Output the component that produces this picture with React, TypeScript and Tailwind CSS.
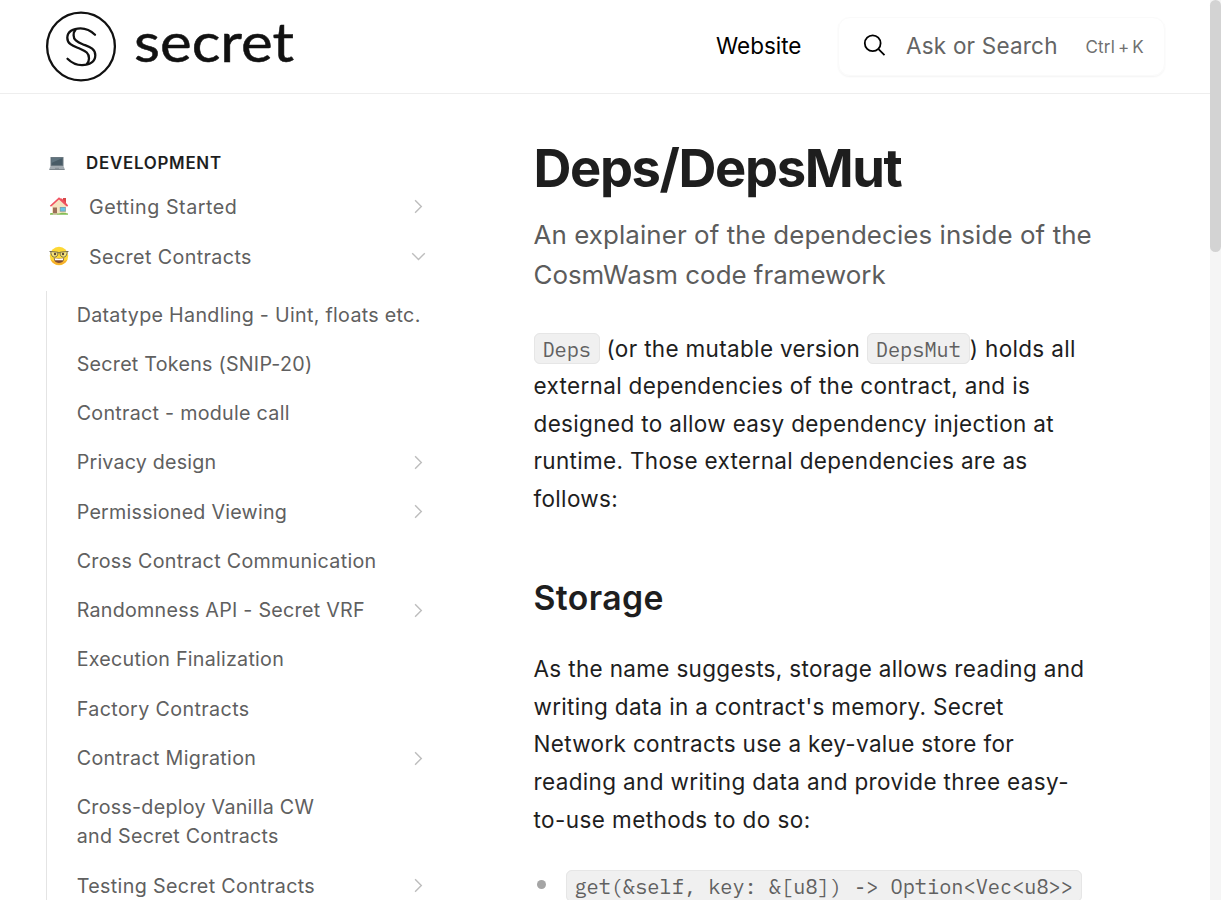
import React from "react";

type Item = { label: string; track: string; more?: boolean };

const items: Item[] = [
  { label: "Datatype Handling - Uint, floats etc.", track: "tracking-[0.290px]" },
  { label: "Secret Tokens (SNIP-20)", track: "tracking-[0.250px]" },
  { label: "Contract - module call", track: "tracking-[0.270px]" },
  { label: "Privacy design", track: "tracking-[0.200px]", more: true },
  { label: "Permissioned Viewing", track: "tracking-[0.230px]", more: true },
  { label: "Cross Contract Communication", track: "tracking-[0.300px]" },
  { label: "Randomness API - Secret VRF", track: "tracking-[0.260px]", more: true },
  { label: "Execution Finalization", track: "tracking-[0.250px]" },
  { label: "Factory Contracts", track: "tracking-[0.380px]" },
  { label: "Contract Migration", track: "tracking-[0.330px]", more: true },
  { label: "Cross-deploy Vanilla CW\nand Secret Contracts", track: "tracking-[0.260px]" },
  { label: "Testing Secret Contracts", track: "tracking-[0.350px]", more: true },
];

function Chevron({ down = false }: { down?: boolean }) {
  return (
    <svg className="mt-[-1px] h-[17px] w-[17px] shrink-0" viewBox="0 0 17 17" fill="none" stroke="#bdbdbd" strokeWidth="1.4">
      <path d={down ? "M2.2 5.2 8.5 11.4 14.8 5.2" : "M5.1 2.3 11.3 8.5 5.1 14.7"} />
    </svg>
  );
}

function Logo() {
  return (
    <svg className="h-[76px] w-[256px]" viewBox="0 0 256 76" fill="none" stroke="#111" strokeLinecap="round">
      <circle cx="37" cy="38.500" r="33.900" strokeWidth="2.3" />
      <g strokeWidth="2.3" transform="translate(0 .7)">
        <path d="M51 26C46 21 41 19.600 36.500 19.600C29 19.600 23.300 23 23.300 29C23.300 36 30 37.500 36 40C42 42.500 45 44.500 45 49.500C45 52 44.500 53.500 43 55" />
        <path d="M23.500 50C28.500 55 33.500 56.400 38 56.400C45.500 56.400 51.300 53 51.300 46.500C51.300 39.500 44.600 38 38.600 35.500C32.600 33 29.600 31 29.600 26.500C29.600 24 30.100 22.500 31.600 21" />
      </g>
      <text x="90" y="53.500" textLength="160" lengthAdjust="spacingAndGlyphs" fontFamily="Lato, sans-serif" fontSize="54.500" fill="#111" stroke="#111" strokeWidth="0.5">secret</text>
    </svg>
  );
}

function Laptop() {
  return (
    <svg className="h-[15px] w-[16px]" viewBox="0 0 16 15">
      <path d="M1.500 1h13v9h-13z" fill="#6b7880" />
      <path d="M2.500 2h11v7h-11z" fill="#485b66" />
      <path d="M2.500 2h11L2.500 7z" fill="#5f737e" />
      <path d="M1.500 10h13l1.200 3H.3z" fill="#a3abb1" />
      <path d="M.3 13h15.400v1H.3z" fill="#7d868c" />
      <path d="M6 11.800h4v1H6z" fill="#848d94" />
    </svg>
  );
}

function House() {
  return (
    <svg className="mt-[-2px] h-[20px] w-[20px]" viewBox="0 0 20 20">
      <path d="M14 2h3v6h-3z" fill="#d94848" />
      <path d="M3 9 10 3l7 6v9H3z" fill="#f5e3c0" />
      <path d="M.8 9.800 10 1.200l9.200 8.600-1.200 1L10 3.600 2 10.800z" fill="#f05260" />
      <path d="M10 2.400 13 2.400 19 9.200 17.500 10z" fill="#f05260" />
      <path d="M4 11.500h4V18H4z" fill="#9c6f58" />
      <path d="M10.800 11h6v4.700h-6z" fill="#7d9da8" />
      <path d="M11.600 11.700h4.400v3h-4.400z" fill="#65c6e8" />
      <path d="M1 17.500c2-1 3 0 4 0h5c2-1 6-1 9 0v1.300H1z" fill="#84bd55" />
      <path d="M4 17.300h4v1.500H4z" fill="#d8c9ad" />
    </svg>
  );
}

function Nerd() {
  return (
    <svg className="mt-[-2px] h-[20px] w-[20px]" viewBox="0 0 20 20">
      <circle cx="10" cy="10" r="9.200" fill="#fdd835" />
      <path d="M1.600 13.500a9.200 9.200 0 0 0 16.800 0c-4 3-12.800 3-16.800 0z" fill="#f6ae2d" />
      <g fill="#f7e67c" stroke="#69634c" strokeWidth="0.900">
        <path d="M1.800 5.500 8.800 6.200c.5 3-1 5-3.200 5s-3.800-2-3.800-5.700zM18.200 5.500l-7 .7c-.5 3 1 5 3.200 5s3.800-2 3.800-5.700z" />
        <path d="M.5 5.500h1.500M18 5.500h1.500M8.800 6.700h2.400" />
      </g>
      <circle cx="6" cy="8" r="1.200" fill="#5b4534" />
      <circle cx="14" cy="8" r="1.200" fill="#5b4534" />
      <path d="M4.800 12c3 .8 7.400.8 10.400 0-.2 3.300-2.200 4.900-5.200 4.900S5 15.300 4.800 12z" fill="#7a4a32" />
      <path d="M5.600 12.300c2.700.6 6.100.6 8.800 0l-.4 2H6z" fill="#fff" />
    </svg>
  );
}

function Code({ children }: { children: React.ReactNode }) {
  return (
    <code className="rounded-[6px] border border-[#e6e6e6] bg-[#f0f0f0] px-[7.900px] pt-[2px] pb-[0.500px] font-['IBM_Plex_Mono','Liberation_Mono',monospace] text-[20.270px] leading-none text-[#606060]">
      {children}
    </code>
  );
}

export default function App() {
  return (
    <div className="flex h-[900px] w-[1221px] overflow-hidden bg-white font-['Inter',sans-serif] text-[#1e1e1e]">
      <div className="flex w-[1210px] flex-col overflow-hidden">
        <header className="flex h-[94px] shrink-0 items-center border-b border-[#eeeeee] pb-px pl-[44px] pr-[45px]">
          <Logo />
          <span className="ml-auto text-[22.500px] text-black">Website</span>
          <div className="ml-[36.500px] flex h-[59px] w-[327px] items-center rounded-xl border border-[#fafafa] pl-[24px] pr-[20px] shadow-[0_1px_2px_rgba(0,0,0,0.05)]">
            <svg className="mt-[-2px] h-[23px] w-[23px]" viewBox="0 0 23 23" fill="none" stroke="#000" strokeWidth="1.8">
              <circle cx="9.700" cy="9.300" r="7.900" />
              <path d="m15.500 15.100 6 6" />
            </svg>
            <span className="ml-[20px] text-[22.500px] tracking-[0.200px] text-[#646464]">Ask or Search</span>
            <span className="ml-auto pt-[3px] text-[17px] tracking-[0.200px] [word-spacing:-2px] text-[#707070]">Ctrl + K</span>
          </div>
        </header>
        <div className="flex min-h-0 flex-1">
          <aside className="w-[440px] shrink-0 pl-[46px] pt-[54px]">
            <div className="flex h-[30px] items-center pl-[3px] text-[16.900px] font-semibold tracking-[0.740px]">
              <span className="w-[37px]"><Laptop /></span>
              <span className="pt-[2px]">DEVELOPMENT</span>
            </div>
            <div className="flex h-[58px] items-center pl-[3px] pr-[13px] text-[19.700px] tracking-[0.540px] text-[#606060]">
              <span className="w-[40px]"><House /></span>
              <span className="flex-1 pt-[2px]">Getting Started</span>
              <Chevron />
            </div>
            <div className="flex h-[42px] items-center pl-[3px] pr-[13px] text-[19.700px] tracking-[0.400px] text-[#606060]">
              <span className="w-[40px]"><Nerd /></span>
              <span className="flex-1 pt-[2px]">Secret Contracts</span>
              <Chevron down />
            </div>
            <ul className="mt-[12.700px] border-l border-[#e4e4e4] pl-[29.700px]">
              {items.map((item) => (
                <li key={item.label} className="flex items-center py-[10px] pr-[13px] text-[19.700px] leading-[29.250px] text-[#606060]">
                  <span className={"flex-1 whitespace-pre " + item.track}>{item.label}</span>
                  {item.more && <Chevron />}
                </li>
              ))}
            </ul>
          </aside>
          <main className="w-[680px] shrink-0 whitespace-nowrap pl-[93.500px] pt-[44px]">
            <h1 className="pt-px text-[52.500px] leading-[59px] font-bold tracking-[-1.400px]">Deps/DepsMut</h1>
            <p className="mt-[17px] text-[25.900px] leading-[39.500px] text-[#5c5c5c]">
              <span className="tracking-[0.090px]">An explainer of the dependecies inside of the</span><br />CosmWasm code framework
            </p>
            <p className="mt-[35.700px] text-[22.500px] leading-[37.600px] tracking-[0.330px]">
              <span className="tracking-normal"><Code>Deps</Code></span> (or the mutable version <span className="tracking-normal"><Code>DepsMut</Code></span>) holds all<br />
              external dependencies of the contract, and is<br />
              <span className="tracking-[0.350px]">designed to allow easy dependency injection at</span><br />
              runtime. Those external dependencies are as<br />
              follows:
            </p>
            <h2 className="mt-[57.300px] text-[33.750px] leading-[46px] font-semibold tracking-[0.400px]">Storage</h2>
            <p className="mt-[29px] text-[22.500px] leading-[37.650px] tracking-[0.330px]">
              As the name suggests, storage allows reading and<br />
              <span className="tracking-[0.300px]">writing data in a contract's memory. Secret</span><br />
              Network contracts use a key-value store for<br />
              <span className="tracking-[0.360px]">reading and writing data and provide three easy-</span><br />
              <span className="tracking-[0.420px]">to-use methods to do so:</span>
            </p>
            <ul className="mt-[31px] text-[22.500px] leading-[37.600px]">
              <li className="flex h-[38px] items-center">
                <span className="mt-[-8px] ml-[3px] mr-[20px] h-[9px] w-[9px] shrink-0 rounded-full bg-[#a5a5a5]" />
                <span className="mt-[-4px]"><Code>{"get(&self, key: &[u8]) -> Option<Vec<u8>>"}</Code></span>
              </li>
            </ul>
          </main>
        </div>
      </div>
      <div className="w-[11px] bg-[#f5f5f5]">
        <div className="h-[252px] rounded-full bg-[#d3d3d3]" />
      </div>
    </div>
  );
}
